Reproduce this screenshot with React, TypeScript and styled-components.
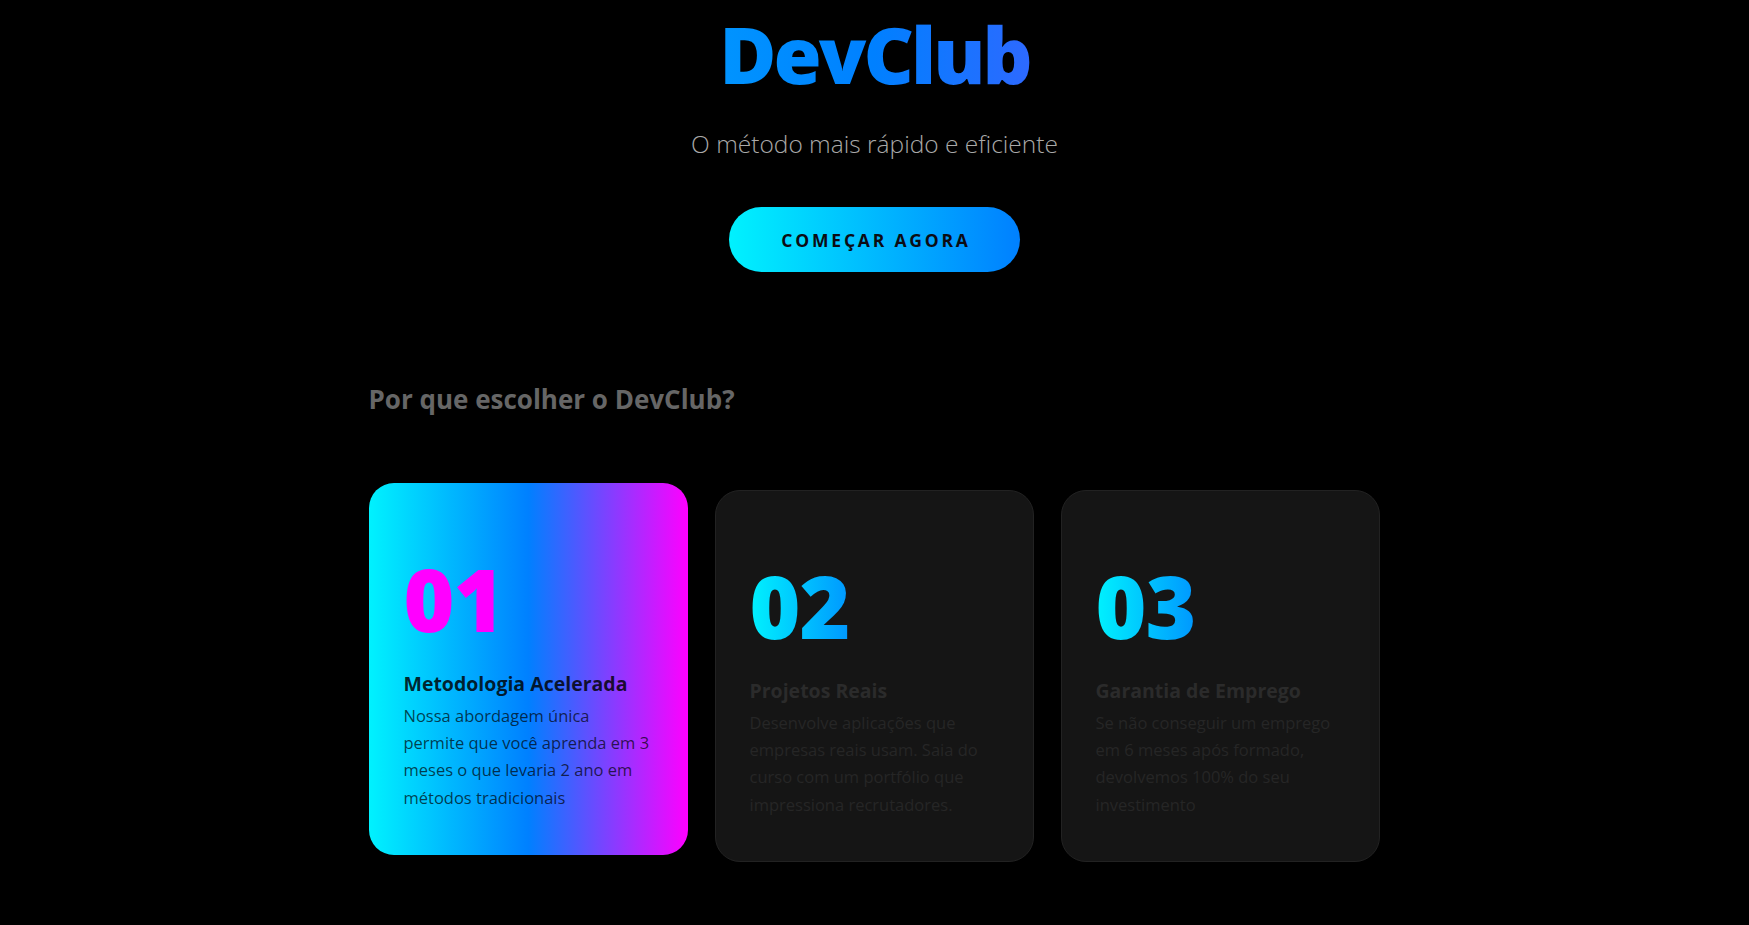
import React from "react";
import styled, { createGlobalStyle, css } from "styled-components";

const GlobalStyle = createGlobalStyle`
  * { box-sizing: border-box; }
  html, body { margin: 0; padding: 0; background: #000; }
  body {
    font-family: "Open Sans", "Noto Sans", sans-serif;
    color: #fff;
  }
`;

const brandGradient = "linear-gradient(90deg, #00f2fe 0%, #0080ff 50%, #ff00ff 100%)";

const Page = styled.main`
  min-height: 100vh;
  display: flex;
  flex-direction: column;
  align-items: center;
  background: #000;
  padding-bottom: 60px;
`;

const Hero = styled.header`
  width: 100%;
  display: flex;
  flex-direction: column;
  align-items: center;
  text-align: center;
  padding-top: 2px;
`;

const Title = styled.h1`
  width: 100%;
  margin: 0;
  font-size: 78px;
  font-weight: 800;
  letter-spacing: -3px;
  line-height: 1.35;
  background: ${brandGradient};
  -webkit-background-clip: text;
  background-clip: text;
  color: transparent;
`;

const Subtitle = styled.p`
  margin: 20px 0 0;
  font-size: 24.5px;
  font-weight: 300;
  color: #a9a9a9;
`;

const CtaButton = styled.button`
  margin-top: 47px;
  border: none;
  border-radius: 50px;
  padding: 20.5px 49px 20.5px 52px;
  background: linear-gradient(90deg, #00f2fe, #0080ff);
  color: #0c0c14;
  font-family: inherit;
  font-size: 17.5px;
  font-weight: 700;
  letter-spacing: 2.8px;
  text-transform: uppercase;
  cursor: pointer;
`;

const Features = styled.section`
  width: 1011px;
  margin: 109px 1px 0 0;
`;

const SectionTitle = styled.h2`
  margin: 0;
  font-size: 26px;
  font-weight: 700;
  color: #666;
`;

const CardGrid = styled.div`
  margin-top: 73px;
  display: grid;
  grid-template-columns: repeat(3, 1fr);
  gap: 27px;
`;

const Card = styled.article<{ $active?: boolean }>`
  border-radius: 25px;
  padding: 71px 34px 43px;
  background: #151515;
  border: 1px solid #222;
  display: flex;
  flex-direction: column;
  ${(p) =>
    p.$active &&
    css`
      background: ${brandGradient};
      background-origin: border-box;
      border-color: transparent;
      transform: translateY(-7px);
    `}
`;

const Number = styled.div<{ $active?: boolean }>`
  font-size: 87px;
  font-weight: 800;
  line-height: 1;
  letter-spacing: -1px;
  ${(p) =>
    p.$active
      ? css`
          color: #ff00ff;
        `
      : css`
          background: ${brandGradient};
          -webkit-background-clip: text;
          background-clip: text;
          color: transparent;
        `}
`;

const CardTitle = styled.h3<{ $active?: boolean }>`
  margin: 29px 0 0;
  font-size: 19.5px;
  font-weight: 700;
  line-height: 1.35;
  color: ${(p) => (p.$active ? "rgba(0, 0, 0, 0.82)" : "#2b2b2b")};
`;

const CardText = styled.p<{ $active?: boolean }>`
  margin: 4px 0 0;
  font-size: 16.5px;
  line-height: 27.3px;
  color: ${(p) => (p.$active ? "rgba(0, 0, 0, 0.7)" : "#262626")};
`;

const features = [
  {
    n: "01",
    title: "Metodologia Acelerada",
    text: "Nossa abordagem única permite que você aprenda em 3 meses o que levaria 2 ano em métodos tradicionais",
    active: true,
  },
  {
    n: "02",
    title: "Projetos Reais",
    text: "Desenvolve aplicações que empresas reais usam. Saia do curso com um portfólio que impressiona recrutadores.",
  },
  {
    n: "03",
    title: "Garantia de Emprego",
    text: "Se não conseguir um emprego em 6 meses após formado, devolvemos 100% do seu investimento",
  },
];

export default function App() {
  return (
    <>
      <GlobalStyle />
      <Page>
        <Hero>
          <Title>DevClub</Title>
          <Subtitle>O método mais rápido e eficiente</Subtitle>
          <CtaButton>Começar agora</CtaButton>
        </Hero>
        <Features>
          <SectionTitle>Por que escolher o DevClub?</SectionTitle>
          <CardGrid>
            {features.map((f) => (
              <Card key={f.n} $active={f.active}>
                <Number $active={f.active}>{f.n}</Number>
                <CardTitle $active={f.active}>{f.title}</CardTitle>
                <CardText $active={f.active}>{f.text}</CardText>
              </Card>
            ))}
          </CardGrid>
        </Features>
      </Page>
    </>
  );
}
